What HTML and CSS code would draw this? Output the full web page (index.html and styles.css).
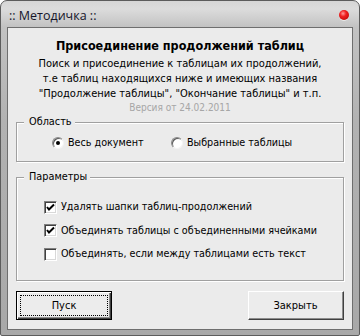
FILE: index.html
```html
<!DOCTYPE html>
<html lang="ru">
<head>
<meta charset="utf-8">
<title>Методичка</title>
<link rel="stylesheet" href="styles.css">
</head>
<body>
<div class="window">
  <div class="titlebar">
    <span class="caption">:: Методичка ::</span>
    <span class="close"></span>
  </div>
  <div class="client">
    <div class="heading">Присоединение продолжений таблиц</div>
    <div class="desc">Поиск и присоединение к таблицам их продолжений,<br>т.е таблиц находящихся ниже и имеющих названия<br>"Продолжение таблицы", "Окончание таблицы" и т.п.</div>
    <div class="version">Версия от 24.02.2011</div>

    <fieldset class="group group-area">
      <legend>Область</legend>
      <div class="radios">
        <label class="opt"><span class="radio on"></span>Весь документ</label>
        <label class="opt"><span class="radio"></span>Выбранные таблицы</label>
      </div>
    </fieldset>

    <fieldset class="group group-params">
      <legend>Параметры</legend>
      <div class="checks">
        <label class="opt"><span class="check on"><svg viewBox="0 0 11 11" width="11" height="11"><polyline points="2,5 4,7.5 9,2.5" fill="none" stroke="#000" stroke-width="2"/></svg></span>Удалять шапки таблиц-продолжений</label>
        <label class="opt"><span class="check on"><svg viewBox="0 0 11 11" width="11" height="11"><polyline points="2,5 4,7.5 9,2.5" fill="none" stroke="#000" stroke-width="2"/></svg></span>Объединять таблицы с объединенными ячейками</label>
        <label class="opt"><span class="check"></span>Объединять, если между таблицами есть текст</label>
      </div>
    </fieldset>

    <div class="buttons">
      <div class="btn default"><span class="focus">Пуск</span></div>
      <div class="btn"><span class="focus plain">Закрыть</span></div>
    </div>
  </div>
</div>
</body>
</html>
```
FILE: styles.css
```css
html, body {
  margin: 0;
  padding: 0;
  background: #ffffff;
}
body {
  width: 360px;
  height: 336px;
  overflow: hidden;
  font-family: "DejaVu Sans Condensed", "DejaVu Sans", sans-serif;
  font-stretch: condensed;
  color: #000;
}
.window {
  box-sizing: border-box;
  width: 360px;
  height: 336px;
  border: 1px solid #5c5c5c;
  border-radius: 7px 7px 2px 2px;
  background: linear-gradient(#d6d6d6 0px, #dcdcdc 8px, #c2c2c2 26px, #b2b2b2 120px, #a8a8a8 100%);
  display: flex;
  flex-direction: column;
}
.titlebar {
  height: 26px;
  display: flex;
  align-items: center;
  padding: 0 8px 0 8px;
}
.caption {
  font-family: "Open Sans", "Noto Sans", sans-serif;
  font-stretch: normal;
  font-size: 12.5px;
  color: #15152a;
  padding-top: 2px;
}
.close {
  margin-left: auto;
  width: 10px;
  height: 10px;
  border-radius: 50%;
  background: radial-gradient(circle at 40% 35%, #ff9a9a 0, #f02020 35%, #b00000 100%);
  box-shadow: 0 1px 0 rgba(255,255,255,0.6);
  margin-right: 2px;
  margin-top: 1px;
}
.client {
  margin: 0 6px;
  height: 303px;
  box-sizing: border-box;
  border: 1px solid #6e6e6e;
  background: #ebebeb;
  padding-top: 10px;
  display: flex;
  flex-direction: column;
}
.heading {
  text-align: center;
  font-weight: bold;
  font-size: 12.5px;
  line-height: 16px;
}
.desc {
  margin-top: 2px;
  text-align: center;
  font-size: 11px;
  line-height: 15px;
}
.version {
  text-align: center;
  font-size: 10px;
  line-height: 14px;
  color: #a6a6a6;
}
.group {
  margin: 0 8px;
  padding: 0;
  border: 1px solid #a0a0a0;
  box-shadow: inset 1px 1px 0 #ffffff, 1px 1px 0 #ffffff;
  min-width: 0;
}
.group legend {
  margin-left: 7px;
  padding: 0 3px 0 5px;
  font-size: 10.8px;
  line-height: 14px;
  background: #ebebeb;
}
.radios {
  display: grid;
  grid-template-columns: 119px auto;
  padding: 6px 0 10px 35px;
}
.group-params {
  margin-top: 8px;
}
.checks {
  display: flex;
  flex-direction: column;
  gap: 7.5px;
  padding: 15px 0 18px 27px;
}
.opt {
  display: flex;
  align-items: center;
  font-size: 10.7px;
  line-height: 16px;
  white-space: nowrap;
}
.radio {
  box-sizing: border-box;
  width: 12px;
  height: 12px;
  border-radius: 50%;
  border: 1px solid;
  border-color: #8a8a8a #f4f4f4 #f4f4f4 #8a8a8a;
  box-shadow: inset 1px 1px 0 #5a5a5a;
  background: #ffffff;
  margin-right: 4px;
  display: flex;
  align-items: center;
  justify-content: center;
}
.radio.on::before {
  content: "";
  width: 4px;
  height: 4px;
  border-radius: 50%;
  background: #000;
}
.check {
  box-sizing: border-box;
  width: 13px;
  height: 13px;
  border: 1px solid;
  border-color: #808080 #ffffff #ffffff #808080;
  box-shadow: inset 1px 1px 0 #404040, inset -1px -1px 0 #d8d8d8;
  background: #ffffff;
  margin-right: 4px;
  display: flex;
  align-items: center;
  justify-content: center;
}
.check svg {
  display: block;
}
.buttons {
  margin-top: 10px;
  padding: 0 8px;
  display: flex;
  justify-content: space-between;
}
.btn {
  box-sizing: border-box;
  width: 96px;
  height: 29px;
  background: #ececec;
  border: 1px solid;
  border-color: #ffffff #404040 #404040 #ffffff;
  box-shadow: inset -1px -1px 0 #8c8c8c;
  display: flex;
  font-size: 11px;
}
.btn.default {
  border: 1px solid #000;
  box-shadow: inset 1px 1px 0 #ffffff, inset -1px -1px 0 #404040, inset -2px -2px 0 #8c8c8c;
}
.focus {
  flex: 1;
  margin: 3px;
  border: 1px dotted #000;
  display: flex;
  align-items: center;
  justify-content: center;
}
.focus.plain {
  border-color: transparent;
  margin: 2px 3px 3px 2px;
}
```
